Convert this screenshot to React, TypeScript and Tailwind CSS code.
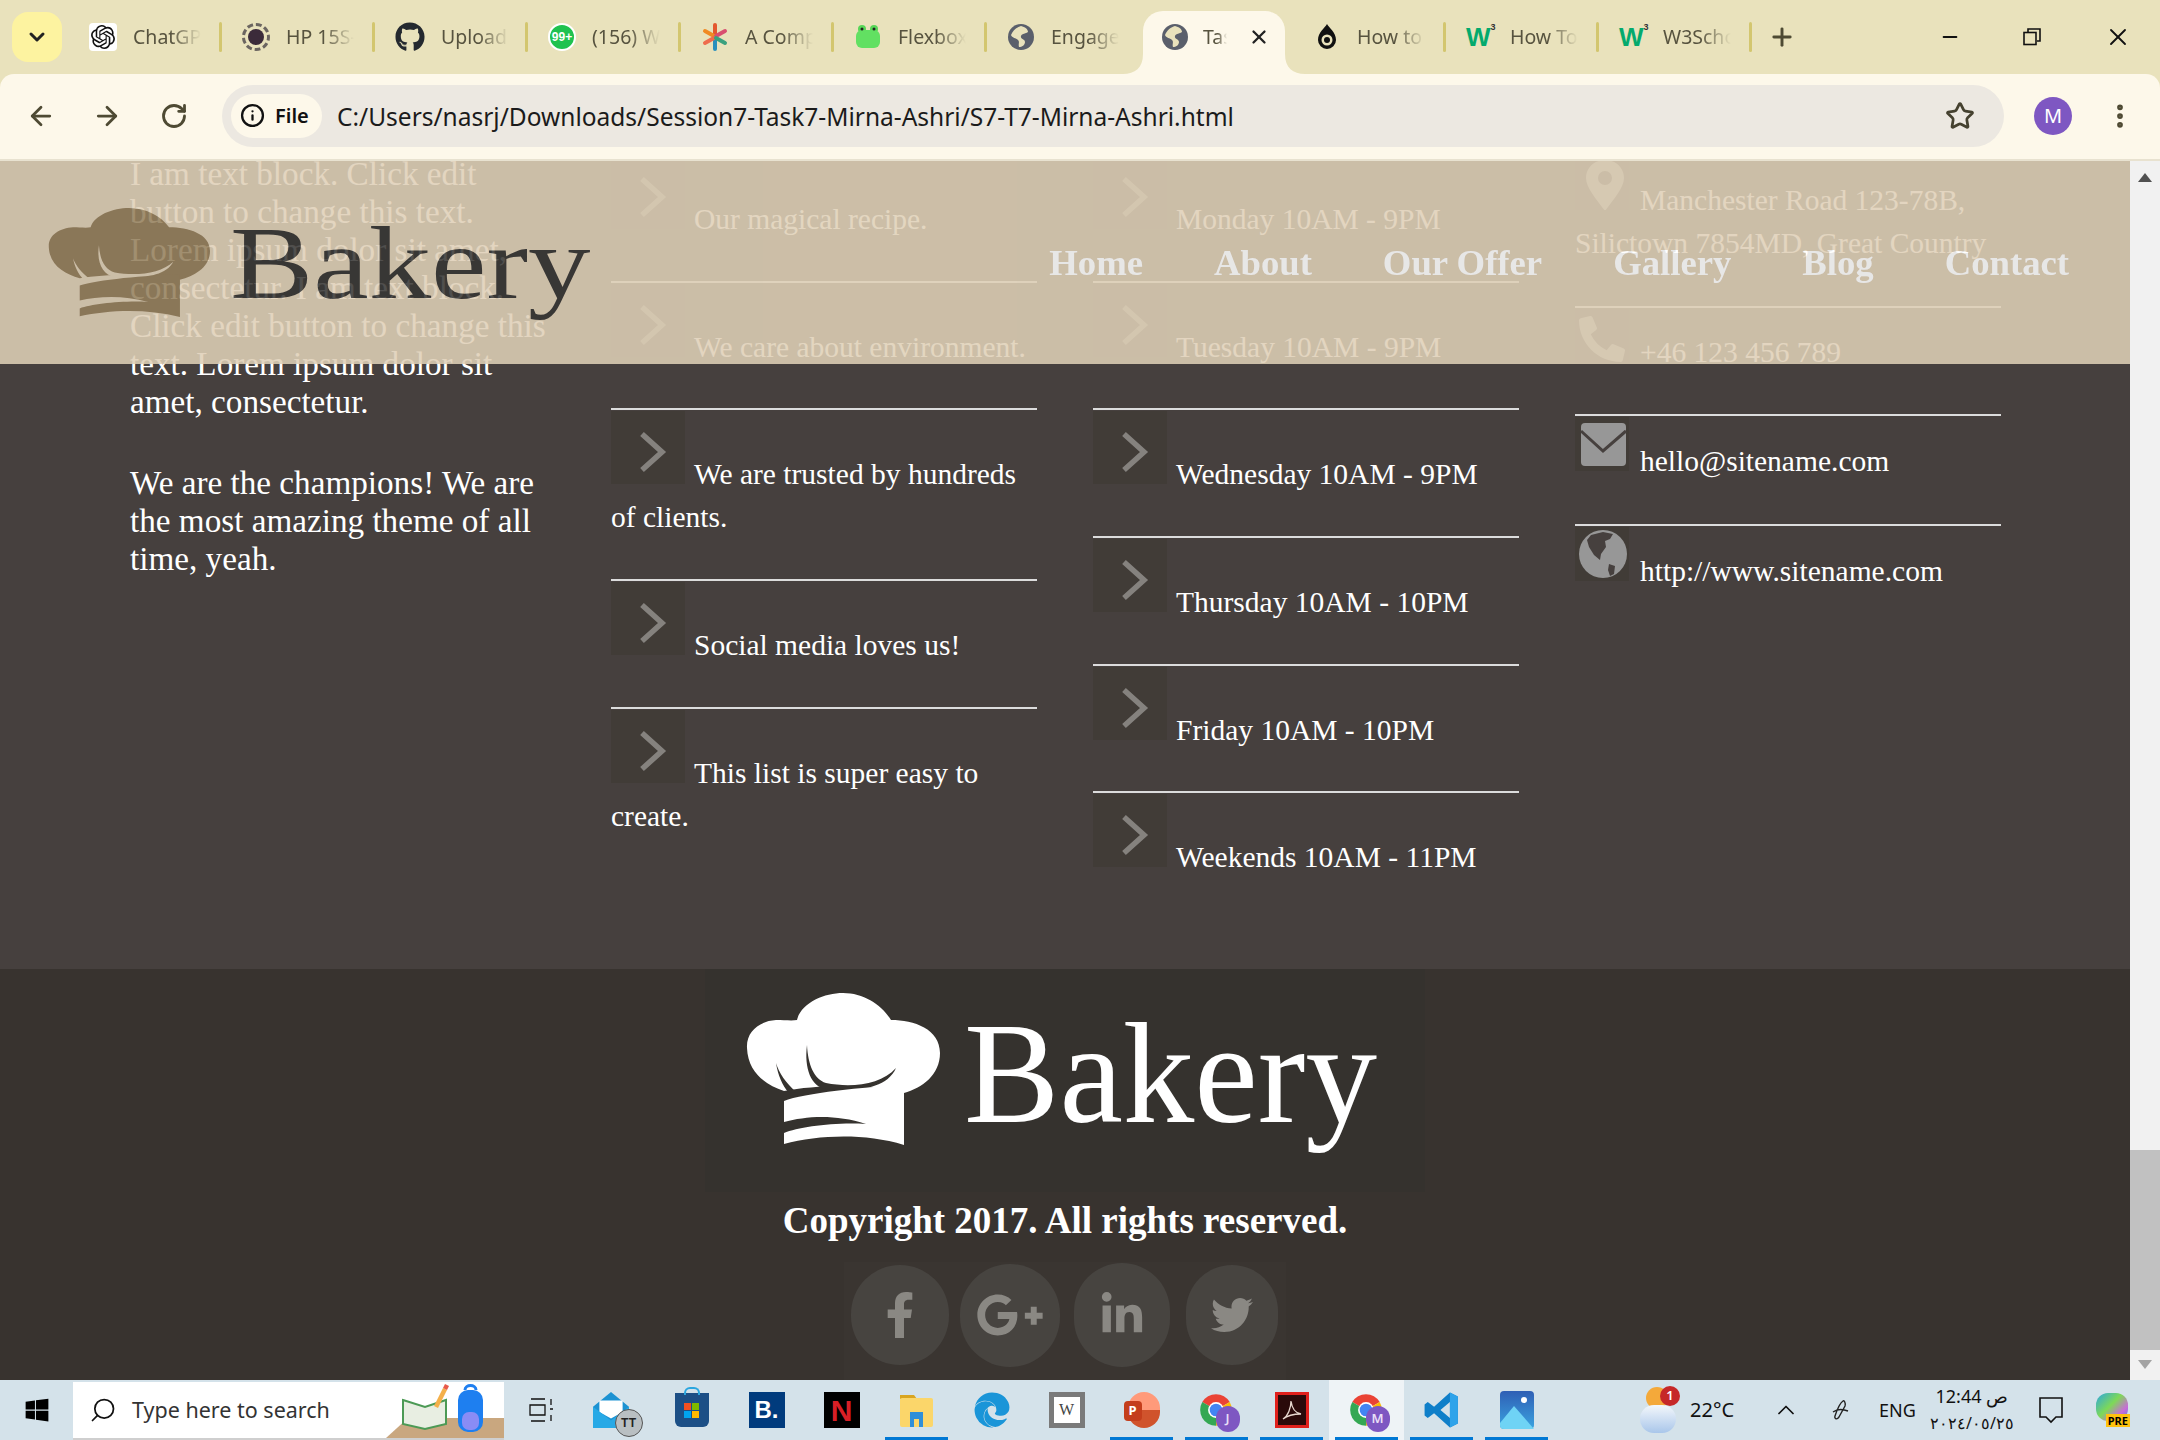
import React from 'react'
import { ArrowLeft, ArrowRight, ChevronDown, ChevronUp, EllipsisVertical, Info, Minus, Plus, RotateCw, Search, Star, X } from 'lucide-react'
import { FaEdge, FaFacebookF, FaGithub, FaGooglePlusG, FaLinkedinIn, FaPhoneAlt, FaTwitter, FaWindows } from 'react-icons/fa'
import { SiOpenai } from 'react-icons/si'

const Globe = () => (
  <svg viewBox="0 0 28 28" className="h-7 w-7 shrink-0">
    <circle cx="14" cy="14" r="13" fill="#5a5f6b" />
    <path d="M14 3c4 1 7 3 7 6-2 2-6 1-7 4s4 3 4 6-3 5-6 5c-1-3 1-5-1-7s-6-2-7-5c2-5 6-8 10-9z" fill="#e9e2bc" />
  </svg>
)

const W3 = () => (
  <span className="flex h-7 w-7 shrink-0 items-start [font-family:'Liberation_Sans',sans-serif] font-bold leading-none text-[#04aa6d]">
    <span className="text-[26px] leading-7">W</span>
    <span className="text-[9px] text-[#333]">3</span>
  </span>
)

const tabs: { label: string; icon: React.ReactNode; sep?: boolean; active?: boolean }[] = [
  { label: 'ChatGPT', sep: true, icon: <span className="flex h-7 w-7 shrink-0 items-center justify-center rounded-sm bg-white"><SiOpenai size={24} color="#111" /></span> },
  { label: 'HP 15S-', sep: true, icon: <span className="flex h-7 w-7 shrink-0 items-center justify-center rounded-full border-[3px] border-dashed border-[#6b6560]"><span className="h-4 w-4 rounded-full bg-[#3b2b3a]" /></span> },
  { label: 'Upload', sep: true, icon: <FaGithub size={30} color="#24292f" className="shrink-0" /> },
  { label: '(156) W', sep: true, icon: <span className="flex h-7 w-7 shrink-0 items-center justify-center rounded-full border-2 border-white bg-[#1fc24f] [font-family:'Liberation_Sans',sans-serif] text-[12px] font-bold text-white">99+</span> },
  {
    label: 'A Comp',
    sep: true,
    icon: (
      <svg viewBox="0 0 28 28" className="h-7 w-7 shrink-0" strokeWidth="4" strokeLinecap="round">
        <path d="M14 2v11" stroke="#e4572e" />
        <path d="M14 15v11" stroke="#2a8fbd" />
        <path d="M4 8l9 5" stroke="#f08a24" />
        <path d="M24 8l-9 5" stroke="#d94f70" />
        <path d="M4 20l9-5" stroke="#ee6c4d" />
        <path d="M24 20l-9-5" stroke="#3aa17e" />
      </svg>
    ),
  },
  {
    label: 'Flexbox',
    sep: true,
    icon: (
      <svg viewBox="0 0 28 28" className="h-7 w-7 shrink-0">
        <circle cx="8" cy="6" r="4" fill="#57d657" />
        <circle cx="20" cy="6" r="4" fill="#57d657" />
        <rect x="2" y="7" width="24" height="18" rx="6" fill="#62e062" />
        <circle cx="8" cy="6" r="1.5" fill="#222" />
        <circle cx="20" cy="6" r="1.5" fill="#222" />
      </svg>
    ),
  },
  { label: 'Engage', icon: <Globe /> },
  { label: 'Tas', active: true, icon: <Globe /> },
  {
    label: 'How to',
    sep: true,
    icon: (
      <svg viewBox="0 0 28 28" className="h-7 w-7 shrink-0">
        <path d="M14 1c2 4 9 8 9 16a9 9 0 0 1-18 0C5 9 12 5 14 1z" fill="#111" />
        <circle cx="14" cy="17" r="5.5" fill="#e9e2bc" />
        <circle cx="14" cy="17" r="3" fill="#111" />
      </svg>
    ),
  },
  { label: 'How To', sep: true, icon: <W3 /> },
  { label: 'W3Schools', sep: true, icon: <W3 /> },
]

const Tab = ({ label, icon, sep, active }: (typeof tabs)[number]) => {
  if (active) {
    return (
      <div className="relative ml-[3px] mr-[8px] flex h-[63px] w-[142px] shrink-0 items-center self-end rounded-t-[20px] bg-[#fdf8ea] pb-[11px] pl-[18px]">
        <svg viewBox="0 0 20 20" className="absolute bottom-0 left-[-20px] h-5 w-5"><path d="M20 0v20H0c12 0 20-6 20-20z" fill="#fdf8ea" /></svg>
        <svg viewBox="0 0 20 20" className="absolute bottom-0 right-[-20px] h-5 w-5"><path d="M0 0v20h20C8 20 0 14 0 0z" fill="#fdf8ea" /></svg>
        {icon}
        <span className="ml-[14px] w-[24px] overflow-hidden whitespace-nowrap text-[19.5px] text-[#57533f] [mask-image:linear-gradient(to_right,black_60%,transparent)]">{label}</span>
        <X size={22} strokeWidth={2.5} className="ml-[21px] text-[#222]" />
      </div>
    )
  }
  return (
    <div className="flex h-full w-[153px] shrink-0 items-center pl-[20px]">
      {icon}
      <span className="ml-[16px] w-[68px] overflow-hidden whitespace-nowrap text-[19.5px] text-[#57533f] [mask-image:linear-gradient(to_right,black_55%,transparent)]">{label}</span>
      <span className="flex-1" />
      {sep && <span className="h-[30px] w-[3px] rounded-sm bg-[#d3c66f]" />}
    </div>
  )
}

const TitleBar = () => (
  <div className="flex h-[74px] shrink-0 bg-[#e9e2bc]">
    <div className="ml-[12px] mr-[7px] mt-[12px] flex h-[50px] w-[50px] items-center justify-center rounded-2xl bg-[#fdf3a0]">
      <ChevronDown size={24} strokeWidth={3} className="text-[#222]" />
    </div>
    {tabs.map((t) => (
      <Tab key={t.label} {...t} />
    ))}
    <Plus size={28} strokeWidth={2.5} className="ml-[16px] mt-[23px] text-[#4e4a33]" />
    <div className="ml-auto flex h-full items-center text-[#111]">
      <span className="flex w-[76px] justify-center"><Minus size={22} strokeWidth={2} /></span>
      <span className="flex w-[88px] justify-center">
        <svg viewBox="0 0 20 20" className="h-5 w-5" fill="none" stroke="#111" strokeWidth="1.6">
          <rect x="2" y="5.5" width="12" height="12" />
          <path d="M6 5V2h12v12h-3" />
        </svg>
      </span>
      <span className="flex w-[84px] justify-center"><X size={28} strokeWidth={1.6} /></span>
    </div>
  </div>
)

const Toolbar = () => (
  <div className="flex h-[87px] shrink-0 items-center rounded-t-[14px] border-b-2 border-[#e8e2d0] bg-[#fdf8ea] pb-[2px] text-[#4e4a33]">
    <ArrowLeft size={30} strokeWidth={2.2} className="ml-[26px]" />
    <ArrowRight size={30} strokeWidth={2.2} className="ml-[36px]" />
    <RotateCw size={28} strokeWidth={2.4} className="ml-[38px]" />
    <div className="ml-[34px] flex h-[62px] w-[1782px] items-center rounded-full bg-[#ece8e1]">
      <div className="ml-[9px] flex h-[44px] w-[91px] items-center rounded-full bg-[#fdf8ea] pl-[9px] text-[#111]">
        <Info size={25} strokeWidth={2.2} />
        <span className="ml-[10px] text-[20px] font-semibold">File</span>
      </div>
      <span className="ml-[15px] mt-[4px] whitespace-nowrap text-[24.5px] text-[#1b1b1b]">C:/Users/nasrj/Downloads/Session7-Task7-Mirna-Ashri/S7-T7-Mirna-Ashri.html</span>
      <Star size={30} strokeWidth={2.2} className="ml-auto mr-[29px] text-[#45412f]" />
    </div>
    <div className="ml-[30px] flex h-[38px] w-[38px] items-center justify-center rounded-full bg-[#7e57c2] text-[20px] text-white">M</div>
    <EllipsisVertical size={30} strokeWidth={2.6} className="ml-[33px]" />
  </div>
)

const Chevron = () => (
  <svg viewBox="0 0 74 73" className="block h-full w-full" fill="none" stroke="#85827e" strokeWidth="5.5">
    <path d="M31 23l20 18-20 18" />
  </svg>
)

const Pin = () => (
  <svg viewBox="0 0 54 54" className="block h-full w-full">
    <path fillRule="evenodd" d="M30 4c11 0 19 8 19 18 0 10-11 22-19 33-8-11-19-23-19-33C11 12 19 4 30 4zm0 11a7 7 0 1 0 0 14 7 7 0 0 0 0-14z" fill="#9a9896" />
  </svg>
)

const Phone = () => (
  <span className="flex h-full w-full items-center justify-center pt-[6px] text-[#9a9896]">
    <FaPhoneAlt size={46} className="-scale-y-100 rotate-[-90deg]" />
  </span>
)

const Mail = () => (
  <svg viewBox="0 0 54 54" className="block h-full w-full">
    <path d="M6 10a4 4 0 0 1 4-4h37a4 4 0 0 1 4 4v35a4 4 0 0 1-4 4H10a4 4 0 0 1-4-4z" fill="#979797" />
    <path d="M6 14l22 20 23-20" fill="none" stroke="#46403e" strokeWidth="3" />
  </svg>
)

const Earth = () => (
  <svg viewBox="0 0 54 54" className="block h-full w-full">
    <circle cx="28" cy="27" r="24" fill="#979797" />
    <path d="M16 8l12-3 10 2-3 5-5 2 1 6-5 7-1 6-6-5-5-8-2-7z" fill="#46403e" />
    <path d="M34 37l6 2-1 8-4 2-2-6z" fill="#46403e" />
  </svg>
)

const IconBox = ({ children, small }: { children: React.ReactNode; small?: boolean }) => (
  <span className={small ? 'mr-[11px] inline-block h-[54px] w-[54px] bg-[#413c37] align-baseline' : 'mr-[9px] inline-block h-[73px] w-[74px] bg-[#413c37] align-baseline'}>
    {children}
  </span>
)

const ListRow = ({ text, icon, small }: { text: string; icon?: React.ReactNode; small?: boolean }) => (
  <li className={small ? 'border-b-2 border-[#dcdcdc] pb-[40.5px] pt-px last:border-b-0' : 'border-b-2 border-[#dcdcdc] pb-[39.7px] pt-px last:border-b-0'}>
    <IconBox small={small}>{icon || <Chevron />}</IconBox>
    {text}
  </li>
)

const Columns = () => (
  <section className="-mt-[6px] grid h-[814px] shrink-0 grid-cols-[425px_426px_426px_426px] gap-x-[56px] bg-[#46403e] pl-[130px] text-[29.5px] leading-[43px] text-white">
    <div className="text-[33.2px] leading-[38px]">
      <p className="mb-[43px]">
        I am text block. Click edit button to change this text. Lorem ipsum dolor sit amet, consectetur. I am text block. Click edit button to change this text. Lorem ipsum dolor sit amet, consectetur.
      </p>
      <p>We are the champions! We are the most amazing theme of all time, yeah.</p>
    </div>
    <ul>
      <ListRow text="Our magical recipe." />
      <ListRow text="We care about environment." />
      <ListRow text="We are trusted by hundreds of clients." />
      <ListRow text="Social media loves us!" />
      <ListRow text="This list is super easy to create." />
    </ul>
    <ul>
      <ListRow text="Monday 10AM - 9PM" />
      <ListRow text="Tuesday 10AM - 9PM" />
      <ListRow text="Wednesday 10AM - 9PM" />
      <ListRow text="Thursday 10AM - 10PM" />
      <ListRow text="Friday 10AM - 10PM" />
      <ListRow text="Weekends 10AM - 11PM" />
    </ul>
    <ul>
      <ListRow small icon={<Pin />} text="Manchester Road 123-78B, Silictown 7854MD, Great Country" />
      <ListRow small icon={<Phone />} text="+46 123 456 789" />
      <ListRow small icon={<Mail />} text="hello@sitename.com" />
      <ListRow small icon={<Earth />} text="http://www.sitename.com" />
    </ul>
  </section>
)

const Hat = ({ className, color, cut }: { className: string; color: string; cut: string }) => (
  <svg viewBox="0 0 194 152" preserveAspectRatio="none" className={className}>
    <path d="M38 98C20 92 2 80 1 55 0 38 14 28 30 27c8 0 16 1 21 0C55 10 78 0 97 0c21 0 39 12 48 27 23 0 49 9 49 33 0 22-18 35-36 40-38-10-88-8-120-2z" fill={color} />
    <path d="M30 70c2 12 6 22 13 30l7-1C40 90 33 80 30 70z" fill={cut} />
    <path d="M61 52c1 20 7 34 19 38 25 5 55 2 70-15-10 23-45 23-70 21-15-2-22-21-19-44z" fill={cut} />
    <path d="M38 108c20-8 80-14 120-16v60c-40-12-85-10-120-1v-11c15-6 50-11 82-9-30-10-60-8-82-2z" fill={color} />
  </svg>
)

const Header = () => (
  <header className="absolute left-0 right-0 top-0 flex h-[203px] justify-between bg-[#dfd0b7] opacity-[0.875] [font-family:'Liberation_Serif',serif]">
    <div className="ml-[48px] mt-[47px] flex items-start">
      <Hat className="h-[109px] w-[162px] shrink-0" color="#947f5c" cut="#dfd0b7" />
      <span className="ml-[20px] mt-[3px] origin-left scale-x-[1.2] text-[104px] leading-[104px] text-[#373634]">Bakery</span>
    </div>
    <nav className="mr-[61px] mt-[80px] flex gap-x-[71px] text-[36.7px] font-bold leading-[44px] text-white">
      <a>Home</a>
      <a>About</a>
      <a>Our Offer</a>
      <a>Gallery</a>
      <a>Blog</a>
      <a>Contact</a>
    </nav>
  </header>
)

const Footer = () => (
  <footer className="flex h-[411px] shrink-0 flex-col items-center bg-[#38332f] [font-family:'Liberation_Serif',serif] text-white">
    <div className="flex h-[223px] w-[720px] shrink-0 items-start bg-[#35322e] pl-[41px] pt-[24px]">
      <Hat className="h-[152px] w-[194px] shrink-0" color="#ffffff" cut="#35322e" />
      <span className="ml-[24px] mt-[10px] text-[143px] leading-[143px]">Bakery</span>
    </div>
    <p className="mt-[7px] text-[37px] font-bold leading-[44px]">Copyright 2017. All rights reserved.</p>
    <div className="mt-[19px] flex h-[118px] w-[442px] items-center bg-[#3a3531] pb-[12px] pl-[7px] text-[#8a8883]">
      <span className="flex h-[100px] w-[98px] items-center justify-center rounded-full bg-[#474440]"><FaFacebookF size={46} /></span>
      <span className="ml-[11px] flex h-[103px] w-[100px] items-center justify-center rounded-full bg-[#474440]"><FaGooglePlusG size={68} /></span>
      <span className="ml-[14px] flex h-[104px] w-[96px] items-center justify-center rounded-full bg-[#474440]"><FaLinkedinIn size={46} /></span>
      <span className="ml-[16px] flex h-[100px] w-[92px] items-center justify-center rounded-full bg-[#474440]"><FaTwitter size={42} /></span>
    </div>
  </footer>
)

const Scrollbar = () => (
  <div className="flex w-[30px] shrink-0 flex-col items-center bg-[#f1f1f1] pt-[12px] text-[#505050]">
    <span className="h-0 w-0 border-x-[7px] border-b-[9px] border-x-transparent border-b-[#505050]" />
    <span className="mt-[968px] h-[200px] w-full bg-[#c1c1c1]" />
    <span className="mt-[10px] h-0 w-0 border-x-[7px] border-t-[9px] border-x-transparent border-t-[#a3a3a3]" />
  </div>
)

const ChromeIcon = ({ letter }: { letter: string }) => (
  <span className="relative block h-[38px] w-[40px]">
    <svg viewBox="0 0 24 24" className="h-[38px] w-[38px]">
      <path d="M12 12L3.34 7A10 10 0 0 1 20.66 7z" fill="#ea4335" />
      <path d="M12 12L20.66 7A10 10 0 0 1 12 22z" fill="#fbbc04" />
      <path d="M12 12L12 22A10 10 0 0 1 3.34 7z" fill="#34a853" />
      <circle cx="12" cy="12" r="5" fill="#fff" />
      <circle cx="12" cy="12" r="4" fill="#4285f4" />
    </svg>
    <span className="absolute bottom-[-3px] right-[-3px] flex h-[26px] w-[24px] items-center justify-center rounded-full bg-[#7e57c2] text-[13px] font-semibold text-[#e8dff7]">{letter}</span>
  </span>
)

const slots: { icon: React.ReactNode; line?: boolean; active?: boolean }[] = [
  {
    icon: (
      <svg viewBox="0 0 26 26" className="h-[26px] w-[26px]" fill="none" stroke="#111" strokeWidth="1.3">
        <path d="M2 2h14M2 24h14M1 8h15v10H1zM22 2v6M22 18v6M21 12h3" />
      </svg>
    ),
  },
  {
    icon: (
      <span className="relative block h-[38px] w-[50px]">
        <svg viewBox="0 0 36 36" className="h-[38px] w-[38px]">
          <path d="M18 1l17 14v20H1V15z" fill="#1c92d2" />
          <path d="M7 9h22v11L18 26 7 20z" fill="#fff" />
          <path d="M1 15l17 13 17-13v20H1z" fill="#27a9e6" />
        </svg>
        <span className="absolute bottom-[-8px] right-[-1px] flex h-[28px] w-[28px] items-center justify-center rounded-full border border-[#555] bg-[#b9bfc2] text-[13px] font-semibold text-[#222]">TT</span>
      </span>
    ),
  },
  {
    icon: (
      <span className="relative flex h-[34px] w-[34px] items-center justify-center rounded-b-md bg-[#1c4f86]">
        <span className="absolute left-[9px] top-[-6px] h-[8px] w-[16px] rounded-t-md border-2 border-b-0 border-[#2aa6df]" />
        <span className="grid grid-cols-2 gap-[1px]">
          <span className="h-[7px] w-[7px] bg-[#f25022]" />
          <span className="h-[7px] w-[7px] bg-[#7fba00]" />
          <span className="h-[7px] w-[7px] bg-[#00a4ef]" />
          <span className="h-[7px] w-[7px] bg-[#ffb900]" />
        </span>
      </span>
    ),
  },
  { icon: <span className="flex h-[36px] w-[36px] items-center justify-center bg-[#003b7d] [font-family:'Liberation_Sans',sans-serif] text-[24px] font-bold text-white">B.</span> },
  { icon: <span className="flex h-[36px] w-[36px] items-center justify-center bg-black [font-family:'Liberation_Sans',sans-serif] text-[30px] font-bold text-[#d81f26]">N</span> },
  {
    line: true,
    icon: (
      <svg viewBox="0 0 34 36" className="h-[36px] w-[34px]">
        <path d="M0 3h14l3 4H0z" fill="#d9a520" />
        <rect y="6" width="33" height="29" rx="2" fill="#fbd66a" />
        <path d="M10 20h13v15h-4v-8h-5v8h-4z" fill="#2f8fd8" />
      </svg>
    ),
  },
  { icon: <span className="block h-[36px] w-[36px]"><FaEdge size={36} color="#1a95d8" /></span> },
  { icon: <span className="flex h-[36px] w-[36px] items-center justify-center border-[5px] border-[#7a7a7a] bg-white [font-family:'Liberation_Serif',serif] text-[16px] text-[#444]">W</span> },
  {
    line: true,
    icon: (
      <span className="relative block h-[36px] w-[36px]">
        <span className="absolute inset-y-0 right-0 w-[32px] rounded-full bg-[linear-gradient(#ff9a7a_50%,#d0532c_50%)]" />
        <span className="absolute left-0 top-[9px] flex h-[20px] w-[18px] items-center justify-center rounded-sm bg-[#c43e1c] text-[13px] font-bold text-white">P</span>
      </span>
    ),
  },
  { line: true, icon: <ChromeIcon letter="J" /> },
  {
    line: true,
    icon: (
      <span className="flex h-[36px] w-[34px] items-center justify-center border-[3px] border-[#e0201c] bg-[#2a0a0a]">
        <svg viewBox="0 0 24 24" className="h-[24px] w-[24px]" fill="none" stroke="#e8d9d0" strokeWidth="1.3">
          <path d="M3 21c5-3 8-11 8-18 1 8 4 12 10 13-6 0-13 1-18 5z" />
        </svg>
      </span>
    ),
  },
  { line: true, active: true, icon: <ChromeIcon letter="M" /> },
  {
    line: true,
    icon: (
      <svg viewBox="0 0 24 24" className="h-[38px] w-[38px]">
        <path fillRule="evenodd" d="M17 1l5 2.5v17L17 23 7 14l-4 3-2-1.5v-7L3 7l4 3zM17 7l-6 5 6 5z" fill="#0f7fc9" />
        <path d="M17 1l5 2.5v17L17 23z" fill="#2ea3ea" />
      </svg>
    ),
  },
  {
    line: true,
    icon: (
      <svg viewBox="0 0 34 38" className="h-[38px] w-[34px]">
        <defs>
          <linearGradient id="ph" x1="0" y1="0" x2="0" y2="1">
            <stop offset="0" stopColor="#2f5fb5" />
            <stop offset="1" stopColor="#3aa3e0" />
          </linearGradient>
        </defs>
        <rect width="34" height="38" rx="4" fill="url(#ph)" />
        <circle cx="24" cy="9" r="3" fill="#fff" />
        <path d="M0 32l14-17 20 23H4a4 4 0 0 1-4-4z" fill="#6fd3f5" />
      </svg>
    ),
  },
]

const Taskbar = () => (
  <div className="flex h-[60px] shrink-0 items-center bg-[#d4e2ea] text-[#111]">
    <span className="flex w-[73px] justify-center"><FaWindows size={26} color="#000" /></span>
    <div className="flex h-[58px] w-[431px] items-center self-end border-b-2 border-[#cfcfcf] bg-white">
      <Search size={28} strokeWidth={1.5} className="ml-[16px] -scale-x-100" />
      <span className="ml-[15px] text-[21.5px] text-[#333]">Type here to search</span>
      <svg viewBox="0 0 118 56" className="ml-auto h-[56px] w-[118px]">
        <path d="M0 56l22-20h96v20z" fill="#c9a77f" />
        <path d="M17 18l22 7 21-7v24l-21 5-22-5z" fill="#e8eee2" stroke="#4c9a55" strokeWidth="2" />
        <path d="M48 24l9-18 4 2-9 18z" fill="#f4b04a" />
        <path d="M57 6l2-4 4 2-2 4z" fill="#e85a4a" />
        <rect x="72" y="8" width="25" height="42" rx="10" fill="#1e7ff0" />
        <path d="M79 8c0-6 11-6 11 0" fill="none" stroke="#1e7ff0" strokeWidth="3" />
        <rect x="76" y="30" width="17" height="18" rx="7" fill="#8a8cf5" />
      </svg>
    </div>
    {slots.map((s, i) => (
      <div key={i} className={s.active ? 'relative flex h-full w-[75px] shrink-0 items-center justify-center bg-[#eef3f6]' : 'relative flex h-full w-[75px] shrink-0 items-center justify-center'}>
        {s.icon}
        {s.line && <span className="absolute bottom-0 left-[6px] right-[6px] h-[3px] bg-[#0078d4]" />}
      </div>
    ))}
    <div className="relative ml-[86px] h-[46px] w-[38px]">
      <span className="absolute left-[6px] top-0 h-[22px] w-[22px] rounded-full bg-[#f4a93a]" />
      <span className="absolute bottom-0 left-0 h-[28px] w-[36px] rounded-full bg-[linear-gradient(#f3f7fb,#a9c6ea)]" />
      <span className="absolute right-[-2px] top-[-1px] flex h-[20px] w-[20px] items-center justify-center rounded-full bg-[#c62828] text-[13px] font-semibold text-white">1</span>
    </div>
    <span className="ml-[12px] text-[20px]">22°C</span>
    <ChevronUp size={28} strokeWidth={1.5} className="ml-[38px]" />
    <svg viewBox="0 0 24 24" className="ml-[28px] h-[26px] w-[24px]" fill="none" stroke="#222" strokeWidth="1.4">
      <path d="M15 3c-3 2-6 9-8 15-1 3 2 4 4 1l6-11c1-3-1-6-2-5zM5 14c4-3 10-3 15-1" />
    </svg>
    <span className="ml-[27px] text-[18px]">ENG</span>
    <div className="ml-[16px] flex w-[80px] flex-col items-center text-[18px] leading-[27px]">
      <span className="whitespace-nowrap">12:44 ص</span>
      <span className="whitespace-nowrap text-[16px]">٢٠٢٤/٠٥/٢٥</span>
    </div>
    <svg viewBox="0 0 26 28" className="ml-[26px] h-[30px] w-[26px]" fill="none" stroke="#111" strokeWidth="1.6">
      <path d="M2 2h22v19h-6l-5 5-5-5H2z" />
    </svg>
    <span className="relative ml-[32px] block h-[34px] w-[34px]">
      <span className="absolute left-0 top-0 h-[28px] w-[32px] rounded-xl bg-[linear-gradient(135deg,#2ca7e0,#7ed957_45%,#c86dd7_75%,#4a80ee)]" />
      <span className="absolute bottom-0 right-0 bg-[#ffc20e] px-[2px] text-[11px] font-bold leading-[13px] text-black">PRE</span>
    </span>
  </div>
)

const App = () => {
  return (
    <div className="flex h-[1440px] w-[2160px] flex-col overflow-hidden bg-[#e9e2bc] [font-family:'Noto_Sans',sans-serif]">
      <TitleBar />
      <Toolbar />
      <main className="flex h-[1219px] shrink-0">
        <div className="relative flex h-full w-[2130px] flex-col overflow-hidden [font-family:'Liberation_Serif',serif]">
          <Columns />
          <Footer />
          <Header />
        </div>
        <Scrollbar />
      </main>
      <Taskbar />
    </div>
  )
}

export default App
